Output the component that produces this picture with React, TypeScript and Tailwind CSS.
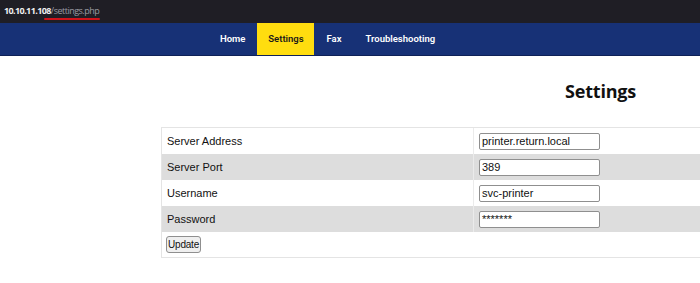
import React from "react";

export default function App() {
  const rows = [
    { label: "Server Address", value: "printer.return.local", gray: false },
    { label: "Server Port", value: "389", gray: true },
    { label: "Username", value: "svc-printer", gray: false },
    { label: "Password", value: "*******", gray: true },
  ];
  const navFont = { fontFamily: 'Roboto, "Open Sans", sans-serif' };
  return (
    <div className="w-[700px] h-[283px] bg-white overflow-hidden relative">
      <div className="h-[23px] bg-[#1f1e25] flex items-center pl-[4px] pb-[2px] relative" style={{ fontFamily: '"Open Sans", sans-serif' }}>
        <span className="text-[9px] tracking-[-0.6px] text-[#f0f0f0] font-bold">10.10.11.108</span>
        <span className="text-[9px] tracking-[-0.5px] text-[#9a9aa2]">/settings.php</span>
        <div className="absolute left-[44px] top-[18px] w-[56px] h-[2px] bg-[#d0141b] rounded-full" />
      </div>
      <div className="h-[33px] bg-[#173176] border-b-[1px] border-[#0f2157] flex">
        <div className="w-[208px]" />
        <div className="px-[12px] flex items-center text-white text-[9.5px] font-semibold" style={navFont}>Home</div>
        <div className="w-[57px] bg-[#ffdd0f] flex items-center justify-center text-[#1a1a1a] text-[9.5px] font-semibold" style={navFont}>Settings</div>
        <div className="px-[12px] flex items-center text-white text-[9.5px] font-semibold" style={navFont}>Fax</div>
        <div className="px-[12px] flex items-center text-white text-[9.5px] font-semibold" style={navFont}>Troubleshooting</div>
      </div>
      <div className="h-[71px] flex items-center pl-[565px]">
        <h1 className="text-[18px] font-bold text-[#111] tracking-[-0.2px]" style={{ fontFamily: '"Open Sans", sans-serif' }}>Settings</h1>
      </div>
      <div className="ml-[161px] w-[600px] border border-[#e4e4e4]" style={{ fontFamily: '"Liberation Sans", Arial, sans-serif' }}>
        {rows.map((r) => (
          <div key={r.label} className={`flex h-[26px] ${r.gray ? "bg-[#dddddd]" : "bg-white"}`}>
            <div className="w-[312px] border-r border-[#ebebeb] flex items-center pl-[5px] text-[11px] text-[#111]">{r.label}</div>
            <div className="flex items-center pl-[5px]">
              <div className="w-[121px] h-[17px] border border-[#8f8f8f] bg-white rounded-[2px] flex items-center pl-[2px] text-[11px] text-[#111]">
                {r.value}
              </div>
            </div>
          </div>
        ))}
        <div className="h-[25px] flex items-center pl-[4px] bg-white">
          <div className="h-[17px] px-[1px] border border-[#8f8f8f] rounded-[3px] bg-[#efefef] text-[10px] tracking-[-0.2px] text-[#111] flex items-center">Update</div>
        </div>
      </div>
    </div>
  );
}
